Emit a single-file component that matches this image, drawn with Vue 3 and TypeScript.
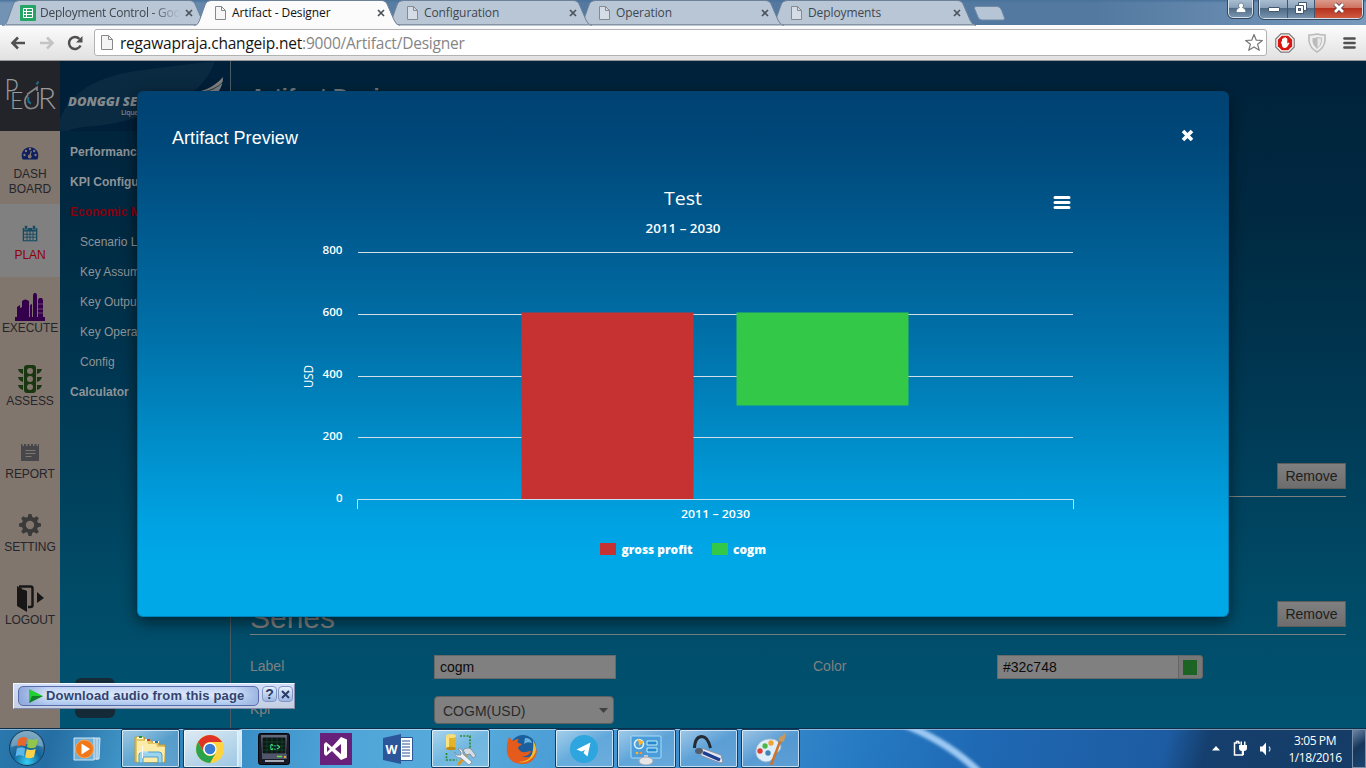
<script setup lang="ts">
interface Tab { title: string; active?: boolean; sheet?: boolean }
const tabs: Tab[] = [
  { title: 'Deployment Control - Goo', sheet: true },
  { title: 'Artifact - Designer', active: true },
  { title: 'Configuration' },
  { title: 'Operation' },
  { title: 'Deployments' },
]

const nav = [
  { id: 'dash', lines: ['DASH', 'BOARD'] },
  { id: 'plan', lines: ['PLAN'] },
  { id: 'execute', lines: ['EXECUTE'] },
  { id: 'assess', lines: ['ASSESS'] },
  { id: 'report', lines: ['REPORT'] },
  { id: 'setting', lines: ['SETTING'] },
  { id: 'logout', lines: ['LOGOUT'] },
]

const menu = [
  { text: 'Performance', kind: 'top' },
  { text: 'KPI Configuration', kind: 'top' },
  { text: 'Economic Model', kind: 'top current' },
  { text: 'Scenario List', kind: 'child' },
  { text: 'Key Assumption', kind: 'child' },
  { text: 'Key Output', kind: 'child' },
  { text: 'Key Operation', kind: 'child' },
  { text: 'Config', kind: 'child' },
  { text: 'Calculator', kind: 'top' },
]

const ticks = [
  { label: '800', y: 161.5, ty: 163 },
  { label: '600', y: 223.5, ty: 225 },
  { label: '400', y: 285.5, ty: 287 },
  { label: '200', y: 346.5, ty: 349 },
]

const apps = [
  { id: 'wmp', state: '' },
  { id: 'explorer', state: 'open' },
  { id: 'chrome', state: 'open stacked' },
  { id: 'cmd', state: '' },
  { id: 'vs', state: '' },
  { id: 'word', state: '' },
  { id: 'tools', state: 'open' },
  { id: 'firefox', state: '' },
  { id: 'telegram', state: 'open' },
  { id: 'control', state: 'open' },
  { id: 'headset', state: 'open' },
  { id: 'paint', state: 'open' },
]
</script>

<template>
  <div class="screen">
    <header class="tabstrip">
      <div class="tabs">
        <div v-for="(t, i) in tabs" :key="t.title" class="tab" :class="{ active: t.active }" :style="{ zIndex: t.active ? 9 : 6 - i }">
          <svg class="tab-shape" width="208" height="26" viewBox="0 0 208 26">
            <path d="M0 25.5C4 25 4.500 23 6 19L11 5Q12.500 1 17 1H188Q192 1 193.500 5L200 20Q202 25 206 25.500V26H0Z" class="tab-fill" />
            <path d="M0 25.500C4 25 4.500 23 6 19L11 5Q12.500 .5 17 .5H188Q192 .5 193.500 5L200 20Q202 25 206 25.500" fill="none" stroke="#6d8199" stroke-width="1" />
            <path v-if="!t.active" d="M4 24.500H204" stroke="#8894a2" />
          </svg>
          <svg v-if="t.sheet" class="fav" width="16" height="16" viewBox="0 0 16 16">
            <rect width="16" height="16" rx="1" fill="#23a566" /><path d="M3.500 3.500h9v9h-9zM3.500 6.500h9M3.500 9.500h9M6.500 3.500v9" fill="none" stroke="#fff" />
          </svg>
          <svg v-else class="fav" width="16" height="16" viewBox="0 0 16 16">
            <path d="M3.500 1.500h6l4 4v9h-10z" :fill="t.active ? '#f6f6f6' : '#d5dce5'" stroke="#858a90" /><path d="M9.500 1.500v4h4" fill="none" stroke="#858a90" />
          </svg>
          <span class="tab-title" :class="{ faded: t.sheet }">{{ t.title }}</span>
          <svg class="tab-x" width="8" height="8" viewBox="0 0 8 8"><path d="M1 1L7 7M7 1L1 7" stroke="#4b5259" stroke-width="1.700" /></svg>
        </div>
        <svg class="newtab" width="34" height="15" viewBox="0 0 34 15"><path d="M3 .5H24Q27 .5 28.500 4L31.500 12Q32 14 30 14H9Q6 14 5 11L1.500 2.500Q1 .5 3 .5Z" fill="#b6c5d5" stroke="#6f89a6" /></svg>
      </div>
      <div class="win-controls">
        <div class="wbtn user"><svg width="12" height="12" viewBox="0 0 12 12"><path d="M6 1a2.500 2.500 0 0 1 1.500 4.500Q11 6.500 11 10.500H1Q1 6.500 4.500 5.500A2.500 2.500 0 0 1 6 1Z" fill="#fff" stroke="#42566d" stroke-width=".6" /></svg></div>
        <div class="wgroup">
          <div class="wbtn min"><svg width="14" height="12" viewBox="0 0 14 12"><rect x="1.500" y="5.500" width="11" height="4" rx=".5" fill="#fff" stroke="#44576d" /></svg></div>
          <div class="wbtn max"><svg width="14" height="14" viewBox="0 0 14 14"><path d="M4.500 1.500h8v8h-8z" fill="#fff" stroke="#44576d" /><path d="M1.500 4.500h8v8h-8z" fill="#fff" stroke="#44576d" /><rect x="4.500" y="7.500" width="2" height="2" fill="#698" stroke="#44576d" /></svg></div>
          <div class="wbtn close"><svg width="14" height="12" viewBox="0 0 14 12"><path d="M3 2L11 10M11 2L3 10" stroke="#543c48" stroke-width="4.500" /><path d="M3 2L11 10M11 2L3 10" stroke="#fff" stroke-width="2.800" /></svg></div>
        </div>
      </div>
    </header>

    <div class="toolbar">
      <svg class="t-icon" width="16" height="16" viewBox="0 0 16 16"><path d="M15 8H3M8 2.500L2.500 8L8 13.500" fill="none" stroke="#505050" stroke-width="2.600" /></svg>
      <svg class="t-icon" width="16" height="16" viewBox="0 0 16 16"><path d="M1 8H13M8 2.500L13.500 8L8 13.500" fill="none" stroke="#c4c4c4" stroke-width="2.600" /></svg>
      <svg class="t-icon" width="17" height="16" viewBox="0 0 17 16"><path d="M13.500 10.500A6 6 0 1 1 12.500 4" fill="none" stroke="#505050" stroke-width="2.500" /><path d="M15.500 1v6.500H9z" fill="#505050" /></svg>
      <div class="omnibox">
        <svg width="14" height="16" viewBox="0 0 14 16"><path d="M1.500 .5h7l4 4v10h-11z" fill="#f4f4f4" stroke="#888" /><path d="M8.500 .5v4h4" fill="none" stroke="#888" /></svg>
        <span class="url">regawapraja.changeip.net<i>:9000/Artifact/Designer</i></span>
        <svg class="star" width="20" height="19" viewBox="0 0 20 19"><path d="M10 1.500L12.300 7.200L18.400 7.500L13.600 11.300L15.300 17.300L10 13.900L4.700 17.300L6.400 11.300L1.600 7.500L7.700 7.200Z" fill="#fff" stroke="#777" stroke-width="1.200" stroke-linejoin="round" /></svg>
      </div>
      <svg class="ext" width="20" height="20" viewBox="0 0 20 20"><path d="M6 .8h8L19.200 6v8L14 19.200H6L.8 14V6z" fill="#fff" stroke="#777" stroke-width="1.200" /><path d="M6.800 2.800h6.400l4 4v6.400l-4 4H6.800l-4-4V6.800z" fill="#d9150f" /><path d="M6 9.500Q6 8 7 8.500V6q.7-.8 1.300 0V5q.6-.9 1.300 0V4.500q.7-.8 1.300 0V5.500q.8-.9 1.400 0v5l1.500-1q.8.300.5 1l-2.300 3.500q-1 1-2.200 1-2.800 0-2.800-3z" fill="#fff" /></svg>
      <svg class="ext" width="18" height="20" viewBox="0 0 18 20"><path d="M9 1Q13 2 17 2V8Q16 15 9 19Q2 15 1 8V2Q5 2 9 1Z" fill="#eee" stroke="#bbb" stroke-width="1.600" /><path d="M9 4.500Q11 5 13.500 5V8.500Q13 12.500 9 15.500Z" fill="#e7e7e7" stroke="#bbb" /><path d="M9 4.500Q7 5 4.500 5V8.500Q5 12.500 9 15.500Z" fill="#bbb" /></svg>
      <svg class="burger" width="14" height="14" viewBox="0 0 14 14"><path d="M1.500 2.500h10M1.500 7h10M1.500 11.500h10" stroke="#505050" stroke-width="2.700" stroke-linecap="round" /></svg>
    </div>

    <div class="viewport">
      <nav class="rail">
        <div class="logo">
          <svg width="60" height="70" viewBox="0 0 60 70">
            <g fill="none" stroke="#858688" stroke-width="1.700">
              <path d="M27 33.500L37 26.500V30M28 34Q24.500 37 25 41.500Q26 48 31.500 47.500Q38 47 38 41V31" />
            </g>
            <path d="M28.500 36Q27 41 31 42.500M36.500 23.500L38.500 20.500" stroke="#1c6f8d" stroke-width="2" fill="none" />
            <g class="logo-type"><text x="4.500" y="38.500" font-size="29" textLength="14" lengthAdjust="spacingAndGlyphs">P</text><text x="10" y="48" font-size="23" textLength="13">E</text><text x="38" y="48" font-size="29" textLength="18" lengthAdjust="spacingAndGlyphs">R</text></g>
          </svg>
        </div>
        <div v-for="n in nav" :key="n.id" class="nav-item" :class="n.id">
          <div class="nav-icon">
            <svg v-if="n.id === 'dash'" width="18" height="14" viewBox="0 0 18 14"><path d="M1.700 13.500A8.300 8.300 0 1 1 16.300 13.500Z" fill="#0d1f5f" /><g fill="#80766d"><circle cx="3.500" cy="9" r="1.200" /><circle cx="5" cy="5" r="1.200" /><circle cx="9" cy="3" r="1.200" /><circle cx="13.200" cy="5" r="1.200" /><circle cx="14.500" cy="9" r="1.200" /><circle cx="8.700" cy="10.500" r="1.900" /></g><path d="M8.700 10.500L10.300 5" stroke="#80766d" stroke-width="1.200" /></svg>
            <svg v-else-if="n.id === 'plan'" width="16" height="17" viewBox="0 0 16 17"><path d="M.7 3h14.600v13.300H.7z" fill="#154a60" /><path d="M2.500 .5h3v4h-3zM10.500 .5h3v4h-3z" fill="#154a60" stroke="#808080" stroke-width=".6" /><path d="M2 6.500h12v8.700H2z" fill="#808080" /><path d="M2 9.300h12M2 12.200h12M5 6v9M8 6v9M11 6v9" stroke="#154a60" stroke-width=".9" /></svg>
            <svg v-else-if="n.id === 'execute'" width="30" height="29" viewBox="0 0 30 29"><path d="M0 29V25H2V15L5 13V16L7 15V9Q10 6 14 9V25H15V13L17 12V25H18V3L19 1H21L22 3V25H23V8L24 6H27L28 8V25H30V29Z" fill="#35004b" /><path d="M14.500 16v9M17.500 10v15M22.500 11v14M23 12h5M23 17h5M23 21h5" stroke="#80766d" stroke-width=".6" /></svg>
            <svg v-else-if="n.id === 'assess'" width="24" height="28" viewBox="0 0 24 28"><path d="M9 0H15Q18 0 18 3V25Q18 28 15 28H9Q6 28 6 25V3Q6 0 9 0ZM0 4h5v5q-4-1-5-5zM0 12h5v5q-4-1-5-5zM0 20h5v5q-4-1-5-5zM24 4h-5v5q4-1 5-5zM24 12h-5v5q4-1 5-5zM24 20h-5v5q4-1 5-5z" fill="#193710" /><g fill="#80766d"><circle cx="12" cy="6" r="3" /><circle cx="12" cy="14" r="3" /><circle cx="12" cy="22" r="3" /></g></svg>
            <svg v-else-if="n.id === 'report'" width="18" height="18" viewBox="0 0 18 18"><path d="M0 1h1.500v2H3V1h2v2h1.500V1h2v2H10V1h2v2h1.500V1h2v2H17V1h1v17H0z" fill="#46464b" /><path d="M4.500 7.500h10M4.500 10.500h10M4.500 13.500h6" stroke="#80766d" stroke-width="1.200" /></svg>
            <svg v-else-if="n.id === 'setting'" width="22" height="22" viewBox="0 0 22 22"><g fill="#3a3a3a"><path d="M9.500 0h3l1 4h-5zM9.500 22h3l1-4h-5zM0 9.500v3l4 1v-5zM22 9.500v3l-4 1v-5z" /><path d="M9.500 0h3l1 4h-5zM9.500 22h3l1-4h-5zM0 9.500v3l4 1v-5zM22 9.500v3l-4 1v-5z" transform="rotate(45 11 11)" /></g><circle cx="11" cy="11" r="6.200" fill="none" stroke="#3a3a3a" stroke-width="4" /></svg>
            <svg v-else width="28" height="27" viewBox="0 0 28 27"><path d="M3 1.500H14.500Q16.500 1.500 16.500 3.500V20Q16.500 22 14.500 22H12" fill="none" stroke="#171717" stroke-width="2.500" /><path d="M1 1L11 6V27L1 21ZM21 7L28 13L21 18Z" fill="#171717" /><path d="M6 4H14V19" fill="none" stroke="#80766d" stroke-width="1.200" /></svg>
          </div>
          <div class="nav-label"><div v-for="l in n.lines" :key="l">{{ l }}</div></div>
        </div>
      </nav>

      <aside class="menu">
        <div class="brand">
          <svg class="brand-art" width="170" height="70" viewBox="0 0 170 70"><path d="M0 70V58Q13 20 75 10Q120 4 155 0Q145 30 105 48Q60 63 35 65Q15 66 8 70Z" fill="#0a2a41" /><path d="M137 31Q147 29 154 24Q160 20 163 16Q163 25 158 31Z" fill="#808080" /><path d="M143 31Q155 29 163 21" fill="none" stroke="#0a2a41" stroke-width=".8" /></svg>
          <div class="brand-name">DONGGI SENORO</div>
          <div class="brand-sub">Liquefied Natural Gas</div>
        </div>
        <div v-for="m in menu" :key="m.text" class="menu-item" :class="m.kind">{{ m.text }}</div>
      </aside>

      <main class="main">
        <h1>Artifact Designer</h1>
        <div class="section-head first"><h2></h2><button>Remove</button></div>
        <div class="section-gap"></div>
        <div class="section-head"><h2>Series</h2><button>Remove</button></div>
        <div class="form-row first-row">
          <label>Label</label><div class="input">cogm</div>
          <label class="second">Color</label>
          <div class="input color">#32c748</div><div class="addon"><span></span></div>
        </div>
        <div class="form-row select-row"><label>Kpi</label><div class="select"><span>COGM(USD)</span><svg width="9" height="5" viewBox="0 0 9 5"><path d="M0 0H9L4.500 5Z" fill="#404040" /></svg></div></div>
      </main>

      <div class="list-badge"><svg width="22" height="22" viewBox="0 0 22 22"><path d="M0 3h22M0 11h22M0 20h22" stroke="#4e5c64" stroke-width="2" /></svg></div>

      <section class="modal">
        <div class="modal-head"><span>Artifact Preview</span><svg width="13" height="13" viewBox="0 0 13 13"><path d="M2 2L11 11M11 2L2 11" stroke="#fff" stroke-width="3.600" /></svg></div>
        <svg class="chart" width="1090" height="445" viewBox="0 80 1090 445">
          <g stroke="#d2dfe6" stroke-width="1"><line v-for="t in ticks" :key="t.label" x1="220" x2="935" :y1="t.y" :y2="t.y" /></g>
          <g class="axis-text"><text v-for="t in ticks" :key="t.label" x="184.500" :y="t.ty" textLength="20" lengthAdjust="spacingAndGlyphs">{{ t.label }}</text><text x="198" y="411" textLength="7">0</text></g>
          <rect x="383.500" y="221.500" width="172" height="187" fill="#c63232" />
          <rect x="598.500" y="221.500" width="172" height="93" fill="#34c849" />
          <path d="M219.500 418V408.500H935.500V418" fill="none" stroke="#c0e2f4" />
          <text class="title" x="526" y="114" textLength="38" lengthAdjust="spacingAndGlyphs">Test</text>
          <text class="subtitle" x="507.500" y="142" textLength="75" lengthAdjust="spacingAndGlyphs">2011 – 2030</text>
          <text class="cat" x="543" y="427" textLength="69" lengthAdjust="spacingAndGlyphs">2011 – 2030</text>
          <text class="usd" transform="translate(174.500 297) rotate(-90)" textLength="23" lengthAdjust="spacingAndGlyphs">USD</text>
          <rect x="462" y="452" width="16" height="12" fill="#c63232" /><text class="legend" x="483.500" y="463" textLength="71" lengthAdjust="spacingAndGlyphs">gross profit</text>
          <rect x="574" y="452" width="16" height="12" fill="#34c849" /><text class="legend" x="595" y="463" textLength="33" lengthAdjust="spacingAndGlyphs">cogm</text>
          <path d="M917 106.500h14M917 111.500h14M917 116.500h14" stroke="#fff" stroke-width="3" stroke-linecap="round" />
        </svg>
      </section>
    </div>

    <footer class="taskbar">
      <svg class="glow" width="150" height="40" viewBox="0 0 150 40"><defs><filter id="soft" x="-20%" y="-20%" width="140%" height="140%"><feGaussianBlur stdDeviation="1.600" /></filter></defs><path d="M10 -6Q60 13 93 47" fill="none" stroke="#9cc8f3" stroke-width="7" filter="url(#soft)" /></svg>
      <div class="start">
        <svg width="38" height="38" viewBox="0 0 38 38"><defs><radialGradient id="orb" cx=".5" cy=".9" r=".9"><stop offset="0" stop-color="#35d0f5" /><stop offset=".45" stop-color="#12649b" /><stop offset="1" stop-color="#5a8dac" /></radialGradient></defs><circle cx="19" cy="19" r="17.500" fill="url(#orb)" stroke="#173d5b" /><path d="M3 18A16 16 0 0 1 35 18Q19 12 3 18Z" fill="#c5dbe6" opacity=".4" /><path d="M10.500 10Q14.500 6.500 19 9L17.500 17.500Q13 15.500 9 18Z" fill="#e8662a" /><path d="M20.500 9.700Q25 12 30 9.500L28 18Q23.500 20.500 19 18Z" fill="#91c64a" /><path d="M8.800 19.500Q13 17 17.200 19.300L15.800 27.500Q11.500 25 7.500 27.800Z" fill="#5eb5e8" /><path d="M18.700 20Q23 22 27.700 19.700L26 28Q21.500 30.500 17.200 28.200Z" fill="#fdd24b" /></svg>
      </div>
      <div class="apps">
        <div v-for="a in apps" :key="a.id" class="app" :class="a.state">
          <svg v-if="a.id === 'wmp'" width="32" height="32" viewBox="0 0 32 32"><path d="M21 5h7l-1 21h-6z" fill="#8fbddd" stroke="#d0e6f3" /><path d="M2 5h20v22H2z" fill="#6fb0da" stroke="#cfe5f3" /><path d="M25 5v22" stroke="#d0e6f3" /><circle cx="12.500" cy="16" r="9" fill="#f07818" stroke="#f7a75b" /><path d="M9.500 10.500L18 16L9.500 21.500Z" fill="#fff" /></svg>
          <svg v-else-if="a.id === 'explorer'" width="34" height="32" viewBox="0 0 34 32"><path d="M2 4h9l1 3h6l1 2h6l1 3h6V29H2z" fill="#e5c763" stroke="#c49a38" /><path d="M4 8h10l1 3h8l1 3h8l-1 15H4z" fill="#fbecaa" /><path d="M4 5h6M12 7h5M20 9h6" stroke="#fff8d0" stroke-width="2" /><path d="M6 4h3" stroke="#139c36" stroke-width="2" /><path d="M14 7h3" stroke="#d13826" stroke-width="2" /><path d="M22 9h3" stroke="#256fc2" stroke-width="2" /><path d="M6 30V22Q6 19 9 19H26Q29 19 29 22V30H25V24H10V30Z" fill="#9bd4ee" stroke="#509fc8" /><path d="M9.500 13v12M4 19h11" stroke="#fff" opacity=".9" /></svg>
          <svg v-else-if="a.id === 'chrome'" width="30" height="30" viewBox="0 0 30 30"><circle cx="15" cy="15" r="14" fill="#ffd23f" /><path d="M2.900 8A14 14 0 0 1 27.100 8H15A7 7 0 0 0 9 18.500Z" fill="#df3327" /><path d="M2.900 8A14 14 0 0 0 15 29L21 18.500A7 7 0 0 1 9 18.500Z" fill="#2ba24c" /><circle cx="15" cy="15" r="6.600" fill="#fff" /><circle cx="15" cy="15" r="5.300" fill="#3a7bd5" /></svg>
          <svg v-else-if="a.id === 'cmd'" width="32" height="32" viewBox="0 0 32 32"><rect x=".5" y=".5" width="31" height="31" rx="2" fill="#191a25" stroke="#05060b" /><path d="M3 2h26l-1 19H4z" fill="#606879" /><path d="M5 5h22v15H5z" fill="#0a1a15" stroke="#11141d" /><path d="M5 9h22M5 13h22M5 17h22M9 5v15M14 5v15M19 5v15M24 5v15" stroke="#174730" stroke-width=".7" /><text x="12" y="16.500" class="prompt" textLength="10" lengthAdjust="spacingAndGlyphs">C:&gt;</text><path d="M4 21h25v5H4z" fill="#50566a" /><path d="M19 23.500h5" stroke="#6bdd42" stroke-width="1.500" /><path d="M26 24h2" stroke="#e6a729" stroke-width="2" /><path d="M7 28h19" stroke="#a5a9b6" stroke-width="2" /></svg>
          <svg v-else-if="a.id === 'vs'" width="32" height="32" viewBox="0 0 32 32"><rect width="32" height="32" fill="#68217a" /><path d="M4 11l2-2 6 5 9-10 6 2.500v18L21 27 12 18l-6 5-2-2zM7 13v6l3-3zM21 11l-6 5 6 5z" fill="#fff" fill-rule="evenodd" /></svg>
          <svg v-else-if="a.id === 'word'" width="32" height="32" viewBox="0 0 32 32"><path d="M16 4.500h14.500v23H16z" fill="#fff" stroke="#2b579a" /><path d="M20 8h8M20 11h8M20 14h8M20 17h8M20 20h8M20 23h8" stroke="#2b579a" stroke-width="1.200" /><path d="M1 5L19 1V31L1 27Z" fill="#2b579a" /><text x="3.500" y="20.500" class="word" textLength="12" lengthAdjust="spacingAndGlyphs">W</text></svg>
          <svg v-else-if="a.id === 'tools'" width="34" height="34" viewBox="0 0 34 34"><path d="M3 4h10v13H3z" fill="#e2b32b" /><path d="M3 5h3v12H3z" fill="#fae281" /><ellipse cx="8" cy="4" rx="5" ry="2" fill="#f7dc7a" /><ellipse cx="8" cy="16.500" rx="5" ry="1.700" fill="#c18c12" /><path d="M17 4h10v12M3.500 21v7h10" fill="none" stroke="#2f8a2f" stroke-width="1.700" stroke-dasharray="2 1.300" /><path d="M26 20L15 33" stroke="#d49a2c" stroke-width="3" /><path d="M20 18q5-4 9 0l4 6-3 2-3-4-4 1z" fill="#d5dce4" stroke="#7a8797" stroke-width=".8" /><path d="M15 17l3 3v3h-4l-2-3q0 6 6 6l8 7 3-3-9-8q0-6-5-5z" fill="#eef2f6" stroke="#7b8896" stroke-width=".8" /></svg>
          <svg v-else-if="a.id === 'firefox'" width="32" height="32" viewBox="0 0 32 32"><circle cx="17" cy="15" r="13" fill="#1c5f9e" /><path d="M19 5q6 0 7 5-5-2-8 1z" fill="#65b5df" /><path d="M3 4l4 4q2-2 6-2-2 2-1 4 3 0 4 2-3 0-4 3 2 5 8 4 3-1 5-1-2 6-9 5 6 3 10-1 4-4 2-12 5 8 1 14-5 8-14 7Q3 30 1 20 0 11 3 4z" fill="#e55b1c" /><path d="M27 7q6 10 0 17-6 7-15 5 11 0 14-8 2-6 1-14z" fill="#f7bc2e" /></svg>
          <svg v-else-if="a.id === 'telegram'" width="30" height="30" viewBox="0 0 30 30"><circle cx="15" cy="15" r="14" fill="#2da5de" /><path d="M7.500 15.500L21.500 8.500L18.500 22.500L14.500 19L16 16L12.500 17.500Z" fill="#fff" /></svg>
          <svg v-else-if="a.id === 'control'" width="32" height="32" viewBox="0 0 32 32"><rect x="1" y="3" width="30" height="22" rx="1" fill="#4a9cda" stroke="#a8dcf7" /><circle cx="9" cy="11" r="4.500" fill="none" stroke="#d5f0ff" stroke-width="1.700" /><path d="M8 6l6 3-5 4z" fill="#ffb52c" /><path d="M17 8h10v4H17zM17 15h10v4H17z" fill="#2788cd" stroke="#c7eefa" /><circle cx="7" cy="20" r="1.300" fill="#ffb52c" /><circle cx="11" cy="20" r="1.300" fill="#ff8d2c" /><path d="M14 22h4v4h-4z" fill="#ccd" /><ellipse cx="16" cy="28" rx="7" ry="4" fill="#e5e5e8" stroke="#a7a7b0" /></svg>
          <svg v-else-if="a.id === 'headset'" width="32" height="32" viewBox="0 0 32 32"><path d="M2.500 15Q3 3.500 10 3.500Q16 4 18.500 15" fill="none" stroke="#252b33" stroke-width="3" /><path d="M6 17q5-3 9 0l14 5 2 7-3 1L10 23z" fill="#e2e6ed" stroke="#8a93a5" /><path d="M11 19.500l17 7.500" stroke="#1c3d93" stroke-width="3.500" /><ellipse cx="7" cy="18" rx="4" ry="3" fill="#535c6a" /></svg>
          <svg v-else width="32" height="32" viewBox="0 0 32 32"><path d="M17 6C3 5-2 20 5 26q7 6 14 0c2-3-1-4 3-6q7-4 4-9-3-5-9-5z" fill="#e0eef8" stroke="#9cb9d0" /><circle cx="6" cy="18" r="2.700" fill="#dd4035" /><circle cx="11" cy="13" r="2.700" fill="#4db848" /><circle cx="17" cy="10" r="2.700" fill="#f2a336" /><circle cx="14" cy="20" r="2.700" fill="#3d85bb" /><path d="M27 6L17 32" stroke="#cf722b" stroke-width="2.500" /><path d="M25 8q-2-4 3-5l3-3q1 6-2 9z" fill="#c99a5e" /></svg>
        </div>
      </div>
      <div class="tray">
        <svg width="8" height="5" viewBox="0 0 8 5"><path d="M0 4.500L4 0L8 4.500Z" fill="#fff" /></svg>
        <svg class="plug" width="16" height="17" viewBox="0 0 16 17"><path d="M7 3H5.500V1.500H3.500V3H1.500V15H9.500V11" fill="none" stroke="#fff" stroke-width="1.500" /><path d="M6 5h8v3q0 3-3 3H9Q6 11 6 8zM7.500 1.500H9V5H7.500zM11 1.500h1.500V5H11zM9.500 10H11v5H9.500z" fill="#fff" /></svg>
        <svg class="sound" width="14" height="14" viewBox="0 0 14 14"><path d="M1 4.500h2.500L7 .5V13.500L3.500 9.500H1z" fill="#fff" /><path d="M10 4.500q2 2.500 0 5" fill="none" stroke="#c5d7e8" stroke-width="1.200" /></svg>
        <div class="clock"><div>3:05 PM</div><div>1/18/2016</div></div>
        <div class="peek"></div>
      </div>
    </footer>

    <div class="grabber">
      <div class="grab-btn"><svg width="16" height="14" viewBox="0 0 16 14"><path d="M1 0L15 7L1 14Z" fill="#22d036" /><path d="M1 14L15 7H4Z" fill="#15802a" /></svg><span>Download audio from this page</span></div>
      <div class="grab-mini">?</div>
      <div class="grab-mini"><svg width="9" height="9" viewBox="0 0 9 9"><path d="M1 1L8 8M8 1L1 8" stroke="#2b3c66" stroke-width="2" /></svg></div>
    </div>
  </div>
</template>

<style scoped>
* { box-sizing: border-box; }
.screen { position: relative; width: 1366px; height: 768px; overflow: hidden; display: flex; flex-direction: column; font-family: "Liberation Sans", Arial, sans-serif; }
.tabstrip { height: 25px; flex: none; display: flex; justify-content: space-between; background: linear-gradient(180deg, #49729a 0, transparent 3px), linear-gradient(90deg, #7393b5 0, #5379a0 35%, #5379a0 80%, #7799bc 100%); }
.tabs { display: flex; padding-left: 2px; }
.tab { position: relative; width: 208px; height: 26px; margin-right: -16px; padding-left: 18px; display: flex; align-items: center; }
.tab-shape { position: absolute; left: 0; top: 0; }
.tab-fill { fill: #b8c6d6; }
.active .tab-fill { fill: #fbfbfb; }
.fav { position: relative; flex: none; }
.tab-title { position: relative; width: 140px; margin-left: 4px; white-space: nowrap; font: 12px/16px "Open Sans", "Noto Sans", sans-serif; letter-spacing: -.1px; color: #3f464e; }
.active .tab-title { color: #111; }
.faded { letter-spacing: -.25px; -webkit-mask-image: linear-gradient(90deg, #000 112px, transparent 140px); mask-image: linear-gradient(90deg, #000 112px, transparent 140px); }
.tab-x { position: relative; margin-left: 5px; }
.newtab { margin: 6px 0 0 11px; }
.win-controls { display: flex; height: 19px; padding-right: 3px; gap: 6px; }
.wgroup { display: flex; border: 1px solid #d5e0ea; border-top: 0; border-radius: 0 0 5px 5px; outline: 1px solid #33485e; overflow: hidden; }
.wbtn { display: flex; align-items: center; justify-content: center; padding-bottom: 2px; background: linear-gradient(#a9bdd0 0, #8aa2ba 44%, #4c6883 45%, #7793ad 100%); height: 18px; }
.user { width: 25px; border: 1px solid #d5e0ea; border-top: 0; border-radius: 0 0 5px 5px; outline: 1px solid #33485e; }
.min { width: 28px; border-right: 1px solid #3f5670; }
.max { width: 27px; border-right: 1px solid #3f5670; }
.close { width: 47px; background: linear-gradient(#dc9a8b 0, #cf7160 44%, #b5301c 45%, #cf5a40 100%); }

.toolbar { position: relative; z-index: 1; height: 36px; flex: none; display: flex; align-items: center; padding-left: 10px; background: linear-gradient(#fcfcfc, #e1e1e1); border-bottom: 1px solid #999; }
.t-icon { margin-right: 13px; flex: none; }
.t-icon + .t-icon + .t-icon { margin-right: 9px; margin-left: -1px; }
.omnibox { width: 1173px; height: 27px; margin-left: 1px; border: 1px solid #b2b2b2; border-radius: 3px; background: #fff; display: flex; align-items: center; padding: 0 2px 0 5px; }
.url { flex: 1; margin-left: 6px; font: 15.500px/22px "Open Sans", "Noto Sans", sans-serif; letter-spacing: -.21px; color: #151515; }
.url i { font-style: normal; color: #858585; }
.ext { margin-left: 8px; }
.ext + .ext { margin-left: 13px; }
.burger { margin-left: 17px; }

.viewport { position: relative; height: 667px; flex: none; display: flex; overflow: hidden; background: linear-gradient(#00223a 0, #002a42 25%, #003853 50%, #004a66 78%, #005371 100%); }
.rail { width: 60px; flex: none; background: #80766d; }
.logo { height: 70px; background: #222429; }
.logo-type { font-family: Lato, sans-serif; font-weight: 300; fill: #9a9b9d; }
.nav-item { height: 73px; }
.nav-item.plan { background: #808080; color: #90000c; }
.nav-icon { height: 44px; padding-top: 14px; display: flex; align-items: center; justify-content: center; }
.dash .nav-icon { height: 36px; padding-top: 7px; }
.nav-label { text-align: center; font-size: 12px; line-height: 15px; letter-spacing: -.08px; color: #25252b; }
.plan .nav-label { color: #90000c; }
.menu { width: 171px; flex: none; border-right: 1px solid #4b5b66; font-size: 12px; }
.brand { position: relative; height: 70px; margin-bottom: 6px; overflow: hidden; color: #84898d; white-space: nowrap; background: #001f38; padding: 32px 0 0 8px; }
.brand-art { position: absolute; left: 0; top: 0; }
.brand-name { position: relative; font: italic 800 13px/17px "Open Sans", sans-serif; }
.brand-sub { position: relative; padding-left: 53px; font: 600 7px/5px "Open Sans", sans-serif; letter-spacing: -.3px; }
.menu-item { height: 30px; line-height: 30px; padding-left: 10px; white-space: nowrap; color: #8e9498; }
.menu-item.top { font-weight: bold; }
.menu-item.current { color: #85000d; }
.menu-item.child { padding-left: 20px; }
.main { flex: 1; padding: 0 20px 0 19px; color: #808080; }
h1 { margin: 0; height: 392px; padding-top: 22px; font-size: 22px; line-height: 28px; color: #70777c; }
h2 { margin: 0; font-size: 30px; line-height: 34px; font-weight: normal; }
.section-head { height: 44px; border-bottom: 1px solid #79807f; display: flex; justify-content: space-between; align-items: flex-start; }
.section-head h2 { padding-top: 10px; }
button { width: 69px; height: 26px; margin-top: 10px; padding: 0; border: 1px solid #5c5c5c; background: linear-gradient(#808080, #6d6d6d); font: 14px "Liberation Sans", sans-serif; color: #1e1e1e; }
.section-gap { height: 94px; }
.form-row { display: flex; align-items: center; font-size: 14px; }
.first-row { height: 24px; margin-top: 20px; }
label { width: 184px; line-height: 20px; margin-top: -2px; }
.input { width: 182px; height: 24px; border: 1px solid #696969; background: #808080; color: #0c0c0c; line-height: 22px; padding-left: 5px; }
.second { margin-left: 197px; }
.addon { width: 25px; height: 24px; margin-left: -1px; padding-right: 1px; display: flex; align-items: center; justify-content: center; background: #777; border: 1px solid #666; border-radius: 0 3px 3px 0; }
.addon span { width: 14px; height: 15px; background: #1b6424; }
.select-row { height: 28px; margin-top: 17px; }
.select { width: 180px; height: 28px; background: #808080; border: 1px solid #606060; border-radius: 4px; color: #2a2a2a; padding: 1px 5px 0 8px; display: flex; align-items: center; justify-content: space-between; }
.list-badge { position: absolute; left: 75px; top: 617px; width: 40px; height: 40px; border-radius: 6px; background: #142b37; display: flex; align-items: center; justify-content: center; }

.modal { position: absolute; left: 137px; top: 30px; width: 1092px; height: 526px; border: 1px solid rgba(0, 60, 100, .35); border-radius: 6px; background: linear-gradient(#004272 0, #00487a 10%, #005589 22%, #0072aa 48%, #008fcb 68%, #00a2e2 82%, #00a8e8 90%, #00a8e8 100%) border-box; box-shadow: 0 5px 15px rgba(0, 0, 0, .55); }
.modal-head { height: 79px; padding: 13px 34px 0; display: flex; justify-content: space-between; align-items: center; color: #fff; font-size: 18px; letter-spacing: .06px; }
.modal-head svg { margin-top: -6px; }
.chart { display: block; font-family: "Open Sans", "Noto Sans", sans-serif; fill: #fff; }
.axis-text { font-size: 11.500px; font-weight: 600; }
.title { font-size: 19px; }
.subtitle { font-size: 12.500px; font-weight: 600; }
.cat { font-size: 11.500px; font-weight: 600; }
.usd { font-size: 12px; }
.legend { font-size: 12px; font-weight: 800; }

.taskbar { position: relative; height: 40px; flex: none; display: flex; border-top: 1px solid #0d2f4b; box-shadow: inset 0 1px 0 rgba(255, 255, 255, .45); background: linear-gradient(105deg, #2a78ad 0, #256ea4 4%, #4398ca 10%, #2f83bd 14%, #4fa5d8 25%, #58abdb 34%, #4296d3 45%, #3888cb 56%, #257ac2 63%, #1f68b3 72%, #1d5ca2 85%, #153f6e 88%, #153c66 100%); }
.glow { position: absolute; left: 890px; top: 0; }
.start { width: 59px; padding-left: 8px; }
.apps { display: flex; gap: 3px; }
.app { width: 59px; height: 39px; display: flex; align-items: center; justify-content: center; padding-right: 1px; }
.open { border: 1px solid #0e3e65; border-radius: 2px; box-shadow: inset 0 0 0 1px rgba(255, 255, 255, .65); background: linear-gradient(150deg, rgba(255, 255, 255, .5), rgba(255, 255, 255, .16) 50%, rgba(255, 255, 255, .22)); }
.stacked { background: linear-gradient(150deg, rgba(255, 255, 255, .85), rgba(255, 255, 255, .5)); border-right: 4px double #d4ecf8; padding-right: 3px; }
.prompt { font: bold 9px "Liberation Mono", monospace; fill: #5df08c; }
.word { font: bold 13px "Open Sans", sans-serif; fill: #fff; }
.tray { margin-left: auto; display: flex; align-items: center; }
.plug { margin-left: 13px; }
.sound { margin-left: 10px; }
.clock { width: 72px; margin-left: 6px; margin-right: 1px; padding-left: 0; text-align: center; font: 12px/17px "Open Sans", "Noto Sans", sans-serif; letter-spacing: -.4px; color: #fff; }
.peek { width: 14px; height: 39px; border: 1px solid #7890a9; background: linear-gradient(145deg, #6b86a4, #17375b 45%, #1c4570); }

.grabber { position: absolute; left: 13px; top: 683px; width: 282px; height: 26px; border: 1px solid #f2f6fd; border-right-color: #888fab; border-bottom-color: #8089a7; background: linear-gradient(#d2dffa, #c5cfe3); display: flex; align-items: flex-start; padding: 2px 1px 0 4px; gap: 1px; }
.grab-btn { width: 241px; height: 20px; border: 1px solid #5b6caa; border-radius: 5px; background: linear-gradient(90deg, #8da8dc, transparent 12%, transparent 90%, #9bb5e2), linear-gradient(#c0d3f5 0, #dce8fa 45%, #a9c5ee 100%); display: flex; align-items: center; padding-left: 9px; margin-right: 2px; color: #34446e; font-size: 13px; font-weight: bold; white-space: nowrap; }
.grab-btn span { margin-left: 2px; margin-top: -2px; letter-spacing: .17px; }
.grab-mini { width: 15px; height: 16px; border: 1px solid #8095c4; border-radius: 4px; background: linear-gradient(#e5eefc, #9db8e4); display: flex; align-items: center; justify-content: center; font-size: 14px; font-weight: bold; color: #2b3c66; }
</style>

<style>
body { margin: 0; overflow: hidden; }
</style>
